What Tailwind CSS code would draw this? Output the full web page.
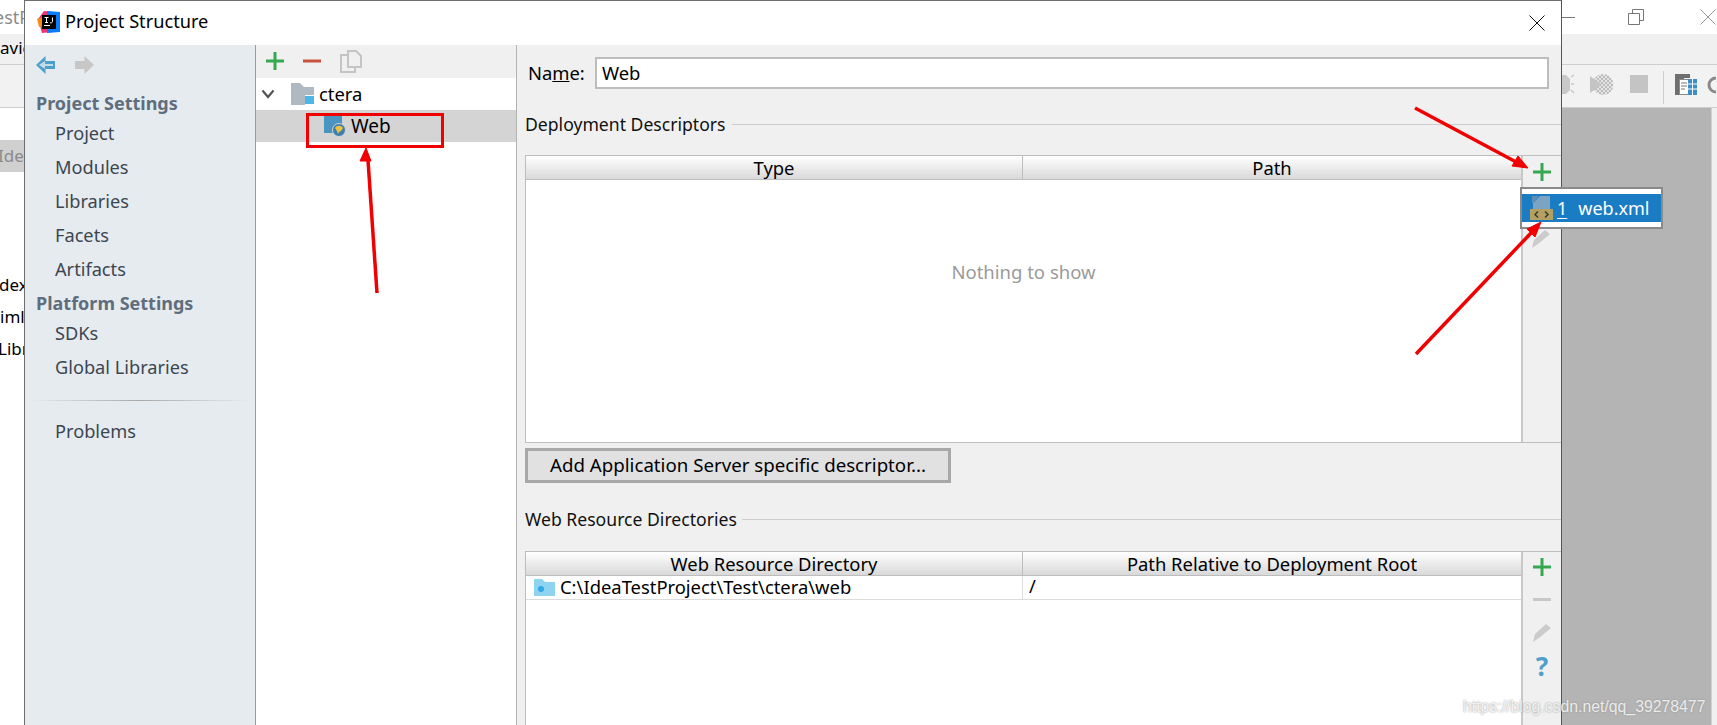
<!DOCTYPE html>
<html lang="en">
<head>
    <meta charset="UTF-8">
    <title>Project Structure</title>
    <script src="https://cdn.jsdelivr.net/npm/@tailwindcss/browser@4"></script>
</head>
<body class="relative w-[1717px] h-[725px] overflow-hidden bg-white text-black text-[18.400px] font-['Noto_Sans',sans-serif]">

    <!-- IDE window behind the dialog -->
    <div class="flex flex-col h-full text-[17px]">
        <div class="flex h-[34px] items-center justify-between">
            <span class="text-[#8a8a8a] text-[18px] -ml-[6px]">estP</span>
            <div class="flex items-center">
                <span class="w-[16px] h-px bg-[#777] mr-[53px]"></span>
                <svg width="16" height="16" viewBox="0 0 16 16" fill="none" stroke="#777" class="mr-[56px]"><path d="M.5 4.5h11v11H.5zM4.5 4.5V.5h11v11h-4"/></svg>
                <svg width="16" height="16" viewBox="0 0 16 16" stroke="#999" class="mr-px"><path d="M.5.5l15 15M15.500.5l-15 15"/></svg>
            </div>
        </div>
        <div class="h-[31px] bg-[#f0f0f0] border-b border-[#cfcfcf] leading-[28px]"><span>avig</span></div>
        <div class="h-[43px] bg-[#f2f2f2] border-b border-[#cfcfcf] flex items-center justify-end pr-px">
            <svg width="155" height="40" viewBox="0 0 155 40">
                <defs>
                    <pattern id="dots" width="4" height="4" patternUnits="userSpaceOnUse">
                        <rect width="4" height="4" fill="#e4e4e4"/>
                        <rect width="2" height="2" fill="#bcbcbc"/>
                        <rect x="2" y="2" width="2" height="2" fill="#bcbcbc"/>
                    </pattern>
                </defs>
                <path d="M0 9h5l4 4v11l-4 4H0z" fill="#c8c8c8"/>
                <path d="M10 11l3-2M10 18h3M10 24l3 3" fill="none" stroke="#c8c8c8" stroke-width="1.500"/>
                <circle cx="42" cy="18.500" r="10.500" fill="url(#dots)"/>
                <path d="M29 10l12 8.500L29 27z" fill="#c4c4c4"/>
                <rect x="69" y="9" width="18" height="18" fill="#c4c4c4"/>
                <rect x="102" y="5" width="1" height="33" fill="#cfcfcf"/>
                <path d="M114 8h15v4h-6v17h-9z" fill="#6f6f6f"/>
                <path d="M118.500 13.500h9v15h-9z" fill="#fff" stroke="#8a8a8a"/>
                <path d="M120 17h6M120 20h6M120 23h4" stroke="#777"/>
                <path d="M127 13h9v16h-9z" fill="#3d8ec4"/>
                <path d="M127 18h9M127 23h9M131.500 13v16" stroke="#fff"/>
                <path d="M155 12a7 7 0 0 0 0 14" fill="none" stroke="#8a8a8a" stroke-width="3"/>
            </svg>
        </div>
        <div class="flex flex-1">
            <div class="flex-1 flex flex-col">
                <div class="h-[32px] mt-[32px] bg-[#d0d0d0] text-[#8a8a8a] leading-[32px] w-[24px] overflow-hidden"><span class="-ml-[2px]">Ide</span></div>
                <div class="mt-[97px] leading-[32px] w-[24px] whitespace-nowrap overflow-hidden">
                    <div class="-ml-[1px]">dex</div>
                    <div>iml</div>
                    <div class="-ml-[2px]">Libr</div>
                </div>
            </div>
            <div class="w-[150px] bg-[#b4b4b4]"></div>
            <div class="w-[6px] bg-[#f0f0f0] border-l border-[#d0d0d0]"></div>
        </div>
    </div>

    <!-- Project Structure dialog -->
    <div class="absolute left-[24px] top-0 w-[1538px] h-[725px] flex flex-col bg-white border border-[#6e6e6e] border-r-[#555] border-b-0">
        <div class="h-[44px] flex items-center justify-between shrink-0">
            <div class="flex items-center pb-[2px]">
                <svg width="24" height="24" viewBox="0 0 24 24" class="ml-[12px] mr-[4px]">
                    <path d="M1 9L7 1l9 1-1 20-10 1z" fill="#f0326f"/>
                    <path d="M0 9l6-2 3 9-7 1z" fill="#f98a1d"/>
                    <path d="M10 1l13 1 0 20-13 1z" fill="#087cfa"/>
                    <rect x="5" y="5" width="14" height="14" fill="#000"/>
                    <path d="M7 15.500h6" stroke="#fff"/>
                    <path d="M7.500 7.500h4M9.500 7.500v5M8 12.500h3M15.500 7.500v4a1.500 1.500 0 0 1-2.500 1" stroke="#fff" fill="none"/>
                </svg>
                <span class="text-[18.200px]">Project Structure</span>
            </div>
            <svg width="16" height="16" viewBox="0 0 16 16" stroke="#111" class="mr-[16px]"><path d="M.5.5l15 15M15.500.5l-15 15"/></svg>
        </div>
        <div class="flex flex-1 min-h-0">
            <!-- sidebar -->
            <div class="w-[231px] shrink-0 bg-[#e6ebf0] border-r border-[#9a9a9a] text-[#3c4650] text-[18.200px] flex flex-col">
                <div class="h-[38px] flex items-center gap-[18px] pl-[11px] pt-[1px]">
                    <svg width="20" height="20" viewBox="0 0 20 20"><path d="M9.500 1L0 10l9.500 9v-5H19V6H9.500z" fill="#4f9fcb"/><path d="M9 6L3 10l6 4z M9 9h8v2H9z" fill="#c4dcea"/></svg>
                    <svg width="20" height="20" viewBox="0 0 20 20"><path d="M10.500 1L20 10l-9.500 9v-5H1V6h9.500z" fill="#c7c7c7"/></svg>
                </div>
                <div class="pl-[11px] h-[34px] leading-[34px] mt-[3px] font-bold text-[18px] text-[#5f6e7c]">Project Settings</div>
                <div class="pl-[30px] h-[31px] leading-[26px]">Project</div>
                <div class="pl-[30px] h-[34px] leading-[32px]">Modules</div>
                <div class="pl-[30px] h-[34px] leading-[32px]">Libraries</div>
                <div class="pl-[30px] h-[34px] leading-[32px]">Facets</div>
                <div class="pl-[30px] h-[34px] leading-[32px]">Artifacts</div>
                <div class="pl-[11px] h-[33px] leading-[32px] font-bold text-[18px] text-[#5f6e7c]">Platform Settings</div>
                <div class="pl-[30px] h-[28px] leading-[26px]">SDKs</div>
                <div class="pl-[30px] h-[34px] leading-[34px] mt-[2px]">Global Libraries</div>
                <div class="h-px bg-gradient-to-r from-[#e6ebf0] via-[#a8a8a8] to-[#e6ebf0] mx-[7px] my-[16px]"></div>
                <div class="pl-[30px] h-[34px] leading-[29px]">Problems</div>
            </div>
            <!-- module tree -->
            <div class="w-[261px] shrink-0 border-r border-[#b4b4b4] flex flex-col">
                <div class="h-[33px] bg-[#f0f0f0] flex items-center pl-[10px] gap-[19px] pb-[2px]">
                    <svg width="18" height="18" viewBox="0 0 18 18"><path d="M7.500 0h3v7.500H18v3h-7.500V18h-3v-7.500H0v-3h7.500z" fill="#36a852"/></svg>
                    <svg width="18" height="18" viewBox="0 0 18 18"><path d="M0 7.500h18v3H0z" fill="#c9523f"/></svg>
                    <svg width="22" height="24" viewBox="0 0 22 24" fill="none" stroke="#c4c4c4" stroke-width="2"><path d="M9 6H1v17h14v-5"/><path d="M8 2v16h13V7l-5-5z"/></svg>
                </div>
                <div class="h-[32px] flex items-center">
                    <svg width="14" height="10" viewBox="0 0 14 10" fill="none" stroke="#555" stroke-width="2.200" class="ml-[5px]"><path d="M1.500 1.500L7 8l5.500-6.500"/></svg>
                    <svg width="24" height="22" viewBox="0 0 24 22" class="ml-[16px]"><path d="M0 0h9l4 4h10v8h-9v10H0z" fill="#afb9c2"/><rect x="14" y="13" width="9" height="8" fill="#4db8e8"/></svg>
                    <span class="ml-[4px]">ctera</span>
                </div>
                <div class="h-[32px] bg-[#d4d4d4] flex items-center pl-[68px]">
                    <svg width="22" height="22" viewBox="0 0 22 22"><rect x="0" y="0" width="18" height="18" fill="#4a94c2"/><circle cx="15" cy="15" r="6.500" fill="#3d7fae" stroke="#d4d4d4"/><path d="M11 13c2-3 6-3 8 0l-2 3-2 1-1 2-1-3z" fill="#f3c23c"/></svg>
                    <span class="ml-[5px] text-[19px]">Web</span>
                </div>
            </div>
            <!-- module settings -->
            <div class="flex-1 min-w-0 bg-[#f0f0f0] flex flex-col pl-[8px]">
                <div class="flex items-center h-[31px] mt-[12px] shrink-0 pr-[12px]">
                    <span class="w-[70px] pl-[3px]">Na<span class="underline">m</span>e:</span>
                    <div class="flex-1 h-[32px] bg-white border-2 border-[#bdbdbd] leading-[28px] pl-[5px]">Web</div>
                </div>
                <div class="flex items-center mt-[25px] h-[24px] shrink-0 text-[17.600px] text-[#111]">
                    <span class="whitespace-nowrap pb-[2px]">Deployment Descriptors</span>
                    <span class="flex-1 h-px bg-[#cdcdcd] ml-[6px] -mt-[2px]"></span>
                </div>
                <div class="flex mt-[18px] h-[288px] shrink-0 border-t border-[#bdbdbd] border-b">
                    <div class="flex-1 min-w-0 flex flex-col bg-white border-l border-[#bdbdbd]">
                        <div class="flex h-[24px] shrink-0 bg-gradient-to-b from-white to-[#d9d9d9] border-b border-[#bdbdbd] leading-[24px] text-center">
                            <div class="w-[497px] border-r border-[#bdbdbd]">Type</div>
                            <div class="flex-1">Path</div>
                        </div>
                        <div class="flex-1 flex items-center justify-center text-[#9a9a9a] text-[18.500px] pb-[78px]">Nothing to show</div>
                    </div>
                    <div class="w-[40px] shrink-0 border-l-2 border-[#c8c8c8] flex flex-col items-center pt-[7px]">
                        <svg width="18" height="18" viewBox="0 0 18 18"><path d="M7.500 0h3v7.500H18v3h-7.500V18h-3v-7.500H0v-3h7.500z" fill="#36a852"/></svg>
                    </div>
                </div>
                <div class="mt-[5px] w-[426px] h-[35px] shrink-0 bg-[#e1e1e1] border-[3px] border-[#a8a8a8] text-center text-[18.700px] leading-[28px]">Add Application Server specific descriptor...</div>
                <div class="flex items-center mt-[26px] h-[24px] shrink-0 text-[17.600px] text-[#111]">
                    <span class="whitespace-nowrap pb-[4px]">Web Resource Directories</span>
                    <span class="flex-1 h-px bg-[#cdcdcd] ml-[5px] -mt-[3px]"></span>
                </div>
                <div class="flex mt-[18px] flex-1 min-h-0 border-t border-[#bdbdbd]">
                    <div class="flex-1 min-w-0 flex flex-col bg-white border-l border-[#bdbdbd]">
                        <div class="flex h-[24px] shrink-0 bg-gradient-to-b from-white to-[#d9d9d9] border-b border-[#bdbdbd] leading-[23px] text-center">
                            <div class="w-[497px] border-r border-[#bdbdbd]">Web Resource Directory</div>
                            <div class="flex-1">Path Relative to Deployment Root</div>
                        </div>
                        <div class="flex h-[24px] shrink-0 border-b border-[#dcdcdc] leading-[20px]">
                            <div class="w-[497px] border-r border-[#dcdcdc] flex items-center pl-[8px]">
                                <svg width="21" height="17" viewBox="0 0 21 17"><path d="M0 0h8l3 3h10v14H0z" fill="#8ed3f0"/><circle cx="7" cy="10" r="3" fill="#2fa9e4"/></svg>
                                <span class="ml-[5px] whitespace-nowrap pb-[2px]">C:\IdeaTestProject\Test\ctera\web</span>
                            </div>
                            <div class="flex-1 pl-[6px]">/</div>
                        </div>
                    </div>
                    <div class="w-[40px] shrink-0 border-l-2 border-[#c8c8c8] flex flex-col items-center pt-[6px]">
                        <svg width="18" height="18" viewBox="0 0 18 18"><path d="M7.500 0h3v7.500H18v3h-7.500V18h-3v-7.500H0v-3h7.500z" fill="#36a852"/></svg>
                        <svg width="18" height="3" viewBox="0 0 18 3" class="mt-[22px]"><path d="M0 0h18v3H0z" fill="#c8c8c8"/></svg>
                        <svg width="18" height="18" viewBox="0 0 18 18" class="mt-[23px]"><path d="M13 0l5 4L6 14l-6 4 2-8z" fill="#cbcbcb"/></svg>
                        <span class="mt-[8px] text-[#4f9fcb] font-bold text-[26px] leading-[32px]">?</span>
                    </div>
                </div>
            </div>
        </div>
    </div>

    <!-- popup menu -->
    <div class="absolute left-[1520px] top-[187px] w-[143px] h-[42px] bg-white border-2 border-[#8a8a8a] py-[5px] flex items-stretch">
        <div class="flex-1 bg-[#1a7dc4] flex items-center text-white text-[18px] pl-[8px]">
            <svg width="23" height="27" viewBox="0 0 23 27">
                <path d="M2 14V9l7-8h-7z" fill="#5f8fb4"/>
                <path d="M10 1h10v13H3V8z" fill="#7aa3c4"/>
                <rect x="0" y="14" width="23" height="11" fill="#b5a064"/>
                <path d="M8 16.500l-3 3 3 3M15 16.500l3 3-3 3" fill="none" stroke="#3a3a2a" stroke-width="1.500"/>
            </svg>
            <span class="underline ml-[4px] underline-offset-[3px]">1</span>
            <span class="ml-[11px]">web.xml</span>
        </div>
    </div>
    <svg width="18" height="18" viewBox="0 0 18 18" class="absolute left-[1532px] top-[230px]"><path d="M13 0l5 4L6 14l-6 4 2-8z" fill="#cbcbcb"/></svg>

    <!-- annotations -->
    <div class="absolute left-[306px] top-[113px] w-[138px] h-[35px] border-[3px] border-[#f00000]"></div>
    <svg width="1717" height="725" class="absolute left-0 top-0 pointer-events-none" fill="#f00000" stroke="#f00000">
        <path d="M377 293L368 160" stroke-width="3.500" fill="none"/>
        <path d="M366 148l-6 13h11z"/>
        <path d="M1415 108L1518 163" stroke-width="3.500" fill="none"/>
        <path d="M1528 168l-16-2 6-10z"/>
        <path d="M1416 354L1531 233" stroke-width="3.500" fill="none"/>
        <path d="M1541 222l-6 15-8-8z"/>
    </svg>

    <!-- watermark -->
    <div class="absolute left-[1463px] top-[695px] text-[15.800px] font-['Liberation_Sans',sans-serif] text-white/80 [text-shadow:0_0_2px_#8a8a8a]">https://blog.csdn.net/qq_39278477</div>
</body>
</html>
